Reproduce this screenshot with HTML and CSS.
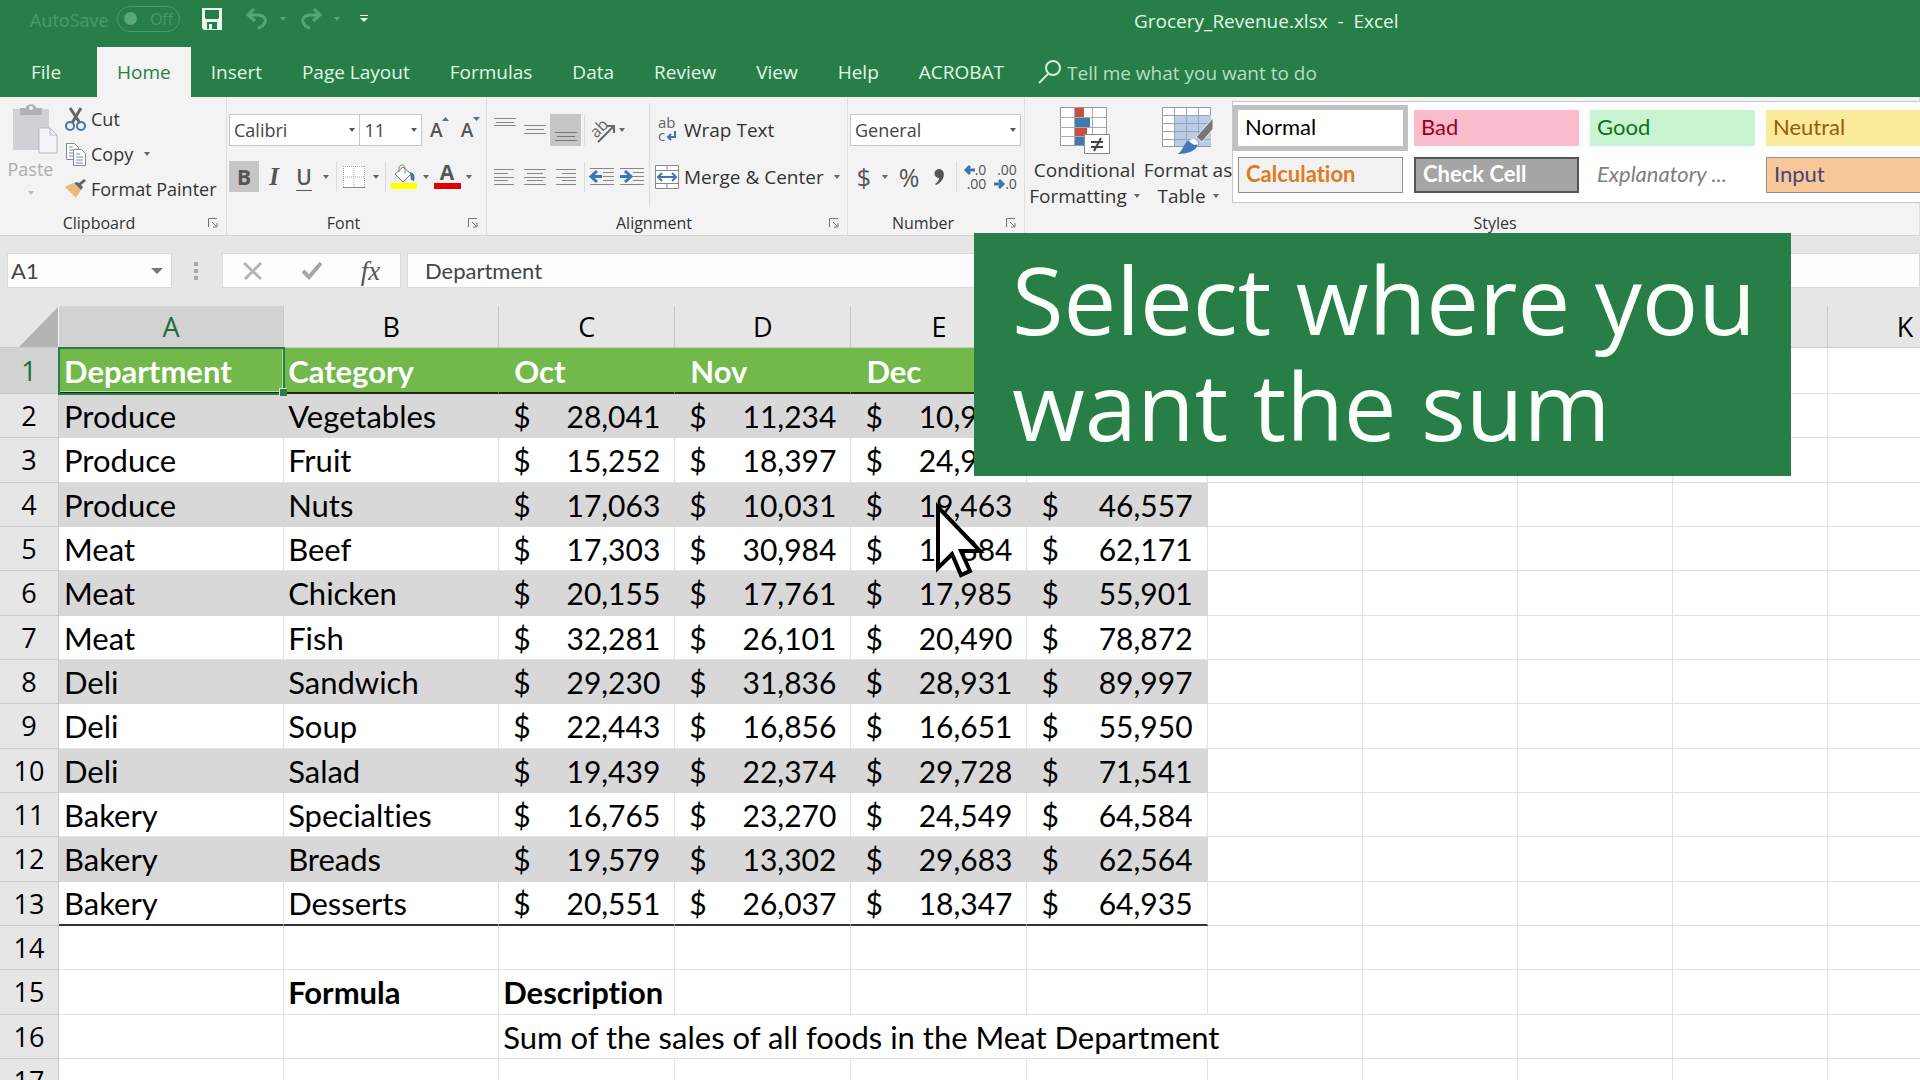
FILE: index.html
```html
<!DOCTYPE html>
<html lang="en">
<head>
<meta charset="utf-8">
<title>Grocery_Revenue.xlsx - Excel</title>
<link rel="stylesheet" href="styles.css">
</head>
<body>
<svg class="defs" aria-hidden="true">
  <symbol id="launcher" viewBox="0 0 10 10"><path d="M.5 9V.5H9M4 4l4 4M9 5v4H5" fill="none" stroke="#777"/></symbol>
</svg>

<header class="titlebar">
  <div class="quick">
    <label class="autosave" for="autosave">AutoSave</label>
    <button class="toggle" id="autosave" type="button"><i></i>Off</button>
    <button class="save" type="button" aria-label="Save"><svg width="20" height="22" viewBox="0 0 20 22"><path fill="#e9fbef" fill-rule="evenodd" d="M0 0h20v22H2l-2-2zM3 2v8l1 1h12l1-1V2zM5 14v7h2v-5h3v5h5v-7z"/></svg></button>
    <button class="undo" type="button" aria-label="Undo"><svg width="22" height="22" viewBox="0 0 22 22"><path d="M8 1L2 7l7 6M2 7h10c6 0 8 4 7 7s-3 5-7 6" fill="none" stroke="#56a674" stroke-width="3"/></svg></button>
    <span class="arrow faint"></span>
    <button class="redo" type="button" aria-label="Redo"><svg width="22" height="22" viewBox="0 0 22 22"><path d="M14 1l6 6-7 6M20 7H10c-6 0-8 4-7 7s3 5 7 6" fill="none" stroke="#56a674" stroke-width="3"/></svg></button>
    <span class="arrow faint"></span>
    <button class="customize" type="button" aria-label="Customize toolbar"><svg width="8" height="8" viewBox="0 0 8 8"><path d="M0 0h8v1H0zM0 3h8L4 7z" fill="#e9fbef"/></svg></button>
  </div>
  <h1 class="filename">Grocery_Revenue.xlsx&nbsp; -&nbsp; Excel</h1>
</header>

<nav class="tabs">
  <a class="file" href="#">File</a>
  <a class="active" href="#">Home</a>
  <a href="#">Insert</a>
  <a href="#">Page Layout</a>
  <a href="#">Formulas</a>
  <a href="#">Data</a>
  <a href="#">Review</a>
  <a href="#">View</a>
  <a href="#">Help</a>
  <a href="#">ACROBAT</a>
  <label class="tell">
    <svg width="24" height="24" viewBox="0 0 24 24"><path d="M10 14L1 23" stroke="#d3f0dc" stroke-width="2"/><circle cx="15" cy="8" r="7" fill="none" stroke="#d3f0dc" stroke-width="2"/></svg>
    <input type="text" placeholder="Tell me what you want to do" aria-label="Tell me what you want to do">
  </label>
</nav>

<section class="ribbon">
  <div class="group clipboard">
    <div class="body">
      <button class="paste" type="button">
        <svg width="46" height="50" viewBox="0 0 46 50"><path d="M1 5h36v41H1z" fill="#d3cfd6"/><path d="M8 4h6c0-5 10-5 10 0h6v7H8z" fill="#b4b1b5"/><circle cx="19" cy="4" r="2" fill="#f3f3f3"/><path d="M27 24h11l7 7v18H27z" fill="#f7f4f9" stroke="#bbb7bd"/><path d="M38 24v7h7" fill="none" stroke="#bbb7bd"/></svg>
        <span>Paste</span><span class="arrow pale"></span>
      </button>
      <div class="stack">
        <button type="button"><svg width="22" height="24" viewBox="0 0 22 24"><path d="M5 1l10 15M16 1L7 16" stroke="#666" stroke-width="3"/><circle cx="5" cy="19" r="4" fill="none" stroke="#4472b4" stroke-width="2"/><circle cx="16" cy="19" r="4" fill="none" stroke="#4472b4" stroke-width="2"/></svg>Cut</button>
        <button type="button"><svg width="22" height="24" viewBox="0 0 22 24"><path d="M1.500 1.500h8l4 4v12h-12z" fill="#fff" stroke="#888"/><path d="M4 5h4M4 8h7M4 11h7M4 14h7" stroke="#6a8fc0"/><path d="M8.500 7.500h8l4 4v12h-12z" fill="#fff" stroke="#888"/><path d="M11 12h4M11 15h7M11 18h7M11 21h7" stroke="#6a8fc0"/></svg>Copy<span class="arrow"></span></button>
        <button type="button"><svg width="22" height="20" viewBox="0 0 22 20"><path d="M0 8l8-4 8 7-5 8z" fill="#ecbb75"/><path d="M9 4l7 7 2-3-2-2 5-4-2-2-5 4-2-1z" fill="#666"/></svg>Format Painter</button>
      </div>
    </div>
    <footer>Clipboard<svg class="launch"><use href="#launcher"/></svg></footer>
  </div>

  <div class="group font">
    <div class="body rows">
      <div class="combos">
        <span class="combo name"><select aria-label="Font"><option>Calibri</option></select></span>
        <span class="combo size"><select aria-label="Font size"><option>11</option></select></span>
        <button class="grow" type="button">A<svg width="7" height="4"><path d="M0 4h7L3.500 0z" fill="#4472b4"/></svg></button>
        <button class="grow" type="button">A<svg width="7" height="4"><path d="M0 0h7L3.500 4z" fill="#4472b4"/></svg></button>
      </div>
      <div class="fontrow">
        <button class="on bold" type="button">B</button>
        <button class="italic" type="button">I</button>
        <button class="under" type="button">U</button>
        <span class="arrow"></span><span class="sep"></span>
        <button type="button" aria-label="Borders"><svg width="22" height="22" viewBox="0 0 22 22"><path d="M0 0h22v22H0z" fill="#fff"/><path d="M.5 0v21M21.500 0v21M0 .5h22M11 0v21M0 11h22" stroke="#aaa" stroke-dasharray="1 1"/><path d="M0 21.500h22" stroke="#888"/></svg></button>
        <span class="arrow"></span><span class="sep"></span>
        <button type="button" aria-label="Fill color"><svg width="28" height="26" viewBox="0 0 28 26"><path d="M5 10l8-7 8 7-8 8z" fill="#fff" stroke="#777"/><path d="M9 8V4c0-4 6-4 6 0v6" fill="none" stroke="#888"/><path d="M20 8c5 1 5 5 4 9l-3-1z" fill="#4472b4"/><path d="M1 19h26v6H1z" fill="#ff0"/></svg></button>
        <span class="arrow"></span>
        <button class="color" type="button">A<i></i></button>
        <span class="arrow"></span>
      </div>
    </div>
    <footer>Font<svg class="launch"><use href="#launcher"/></svg></footer>
  </div>

  <div class="group align">
    <div class="body">
      <div class="rows">
        <div class="alignrow">
          <button class="top" type="button" aria-label="Top align"><svg width="22" height="10"><path d="M0 .5h22M2 4.500h18M0 7.500h22" stroke="#888"/></svg></button>
          <button type="button" aria-label="Middle align"><svg width="22" height="10"><path d="M0 .5h22M2 4.500h18M0 8.500h22" stroke="#888"/></svg></button>
          <button class="on bottom" type="button" aria-label="Bottom align"><svg width="22" height="10"><path d="M0 .5h22M2 4.500h18M0 8.500h22" stroke="#777"/></svg></button>
          <span class="sep"></span>
          <button type="button" aria-label="Orientation"><svg width="26" height="26" viewBox="0 0 26 26"><text x="2" y="19" font-family="Open Sans" font-size="16" fill="#666" transform="rotate(-45 8 14)">ab</text><path d="M9 25L24 10M18 9h7v7" fill="none" stroke="#666" stroke-width="2"/></svg></button>
          <span class="arrow start"></span>
        </div>
        <div class="alignrow">
          <button type="button" aria-label="Align left"><svg width="22" height="16"><path d="M0 .5h20M0 4.500h14M0 8.500h20M0 11.500h14M0 15.500h20" stroke="#888"/></svg></button>
          <button type="button" aria-label="Center"><svg width="22" height="16"><path d="M0 .5h22M3 4.500h16M0 8.500h22M3 11.500h16M0 15.500h22" stroke="#888"/></svg></button>
          <button type="button" aria-label="Align right"><svg width="22" height="16"><path d="M1 .5h20M7 4.500h14M1 8.500h20M7 11.500h14M1 15.500h20" stroke="#888"/></svg></button>
          <span class="sep"></span>
          <button type="button" aria-label="Decrease indent"><svg width="24" height="18"><path d="M0 .5h24M13 4.500h11M13 8.500h11M13 12.500h11M0 16.500h24" stroke="#888"/><path d="M7 3L1 8.500 7 14M1 8.500h11" fill="none" stroke="#3f76b0" stroke-width="3"/></svg></button>
          <button type="button" aria-label="Increase indent"><svg width="24" height="18"><path d="M0 .5h24M13 4.500h11M13 8.500h11M13 12.500h11M0 16.500h24" stroke="#888"/><path d="M5 3l6 5.500L5 14M11 8.500H0" fill="none" stroke="#3f76b0" stroke-width="3"/></svg></button>
        </div>
      </div>
      <div class="rows wide">
        <button class="labelled" type="button"><svg width="26" height="28" viewBox="0 0 26 28"><text x="4" y="12" font-family="Open Sans" font-size="15" fill="#666">ab</text><text x="4" y="25" font-family="Open Sans" font-size="15" fill="#666">c</text><path d="M21 15v6h-7M17 18l-3 3 3 3" fill="none" stroke="#4472b4" stroke-width="2"/></svg>Wrap Text</button>
        <button class="labelled" type="button"><svg width="26" height="24" viewBox="0 0 26 24"><path d="M1.500.5h23v23h-23zM13 .5v5M13 18.500v5M1.500 5.500h23M1.500 18.500h23" fill="#fff" stroke="#888"/><path d="M4 12h18M8 8l-4 4 4 4M18 8l4 4-4 4" fill="none" stroke="#4472b4" stroke-width="2"/></svg>Merge &amp; Center<span class="arrow"></span></button>
      </div>
    </div>
    <footer>Alignment<svg class="launch"><use href="#launcher"/></svg></footer>
  </div>

  <div class="group number">
    <div class="body rows">
      <span class="combo"><select aria-label="Number format"><option>General</option></select></span>
      <div class="numrow">
        <button class="glyph" type="button">$</button><span class="arrow"></span>
        <button class="glyph" type="button">%</button>
        <button type="button" aria-label="Comma style"><svg width="10" height="16" viewBox="0 0 10 16"><path d="M5 0c7 0 7 12-3 16l-1-1c3-2 4-4 4-6C-1 9-1 0 5 0z" fill="#555"/></svg></button>
        <span class="sep"></span>
        <button class="decimal" type="button"><span><svg width="11" height="10"><path d="M6 1L2 5l4 4M2 5h9" fill="none" stroke="#3f76b0" stroke-width="3"/></svg>.0</span><span>.00</span></button>
        <button class="decimal" type="button"><span>.00</span><span><svg width="11" height="10"><path d="M5 1l4 4-4 4M9 5H0" fill="none" stroke="#3f76b0" stroke-width="3"/></svg>.0</span></button>
      </div>
    </div>
    <footer>Number<svg class="launch"><use href="#launcher"/></svg></footer>
  </div>

  <div class="group styles">
    <div class="body">
      <button class="big cond" type="button">
        <svg width="50" height="48" viewBox="0 0 50 48"><path d="M.5.5h46v38H.5z" fill="#fff" stroke="#999"/><path d="M0 10.500h46M0 20.500h46M0 29.500h46M14.500 0v38M32.500 0v38" stroke="#aaa"/><path d="M15 1h9v9h-9zM15 21h12v8H15z" fill="#c84f42"/><path d="M15 11h15v9H15zM15 30h9v8h-9z" fill="#4079b0"/><path d="M24.500 27.500h25v19h-25z" fill="#fff" stroke="#888"/><path d="M31 35h12M31 40h12M41 31l-7 13" stroke="#444" stroke-width="2"/></svg>
        <span>Conditional</span><span>Formatting<i class="arrow"></i></span>
      </button>
      <button class="big astable" type="button">
        <svg width="52" height="48" viewBox="0 0 52 48"><path d="M.5.5h48v39H.5z" fill="#fff" stroke="#999"/><path d="M12 8h37v31H12z" fill="#b9cde8"/><path d="M0 8.500h48M0 16.500h48M0 24.500h48M0 32.500h48M12.500 0v39M24.500 0v39M36.500 0v39" stroke="#99a5b5"/><path d="M51 11v11L40 35l-6-5z" fill="#777" stroke="#f3f3f3"/><path d="M15 47c7-2 6-14 15-14 9 1 8 14-15 14z" fill="#4079b8"/><path d="M27 34c4 5 8 4 9 3-1-6-6-6-9-3z" fill="#fff"/></svg>
        <span>Format as</span><span>Table<i class="arrow"></i></span>
      </button>
      <div class="gallery">
        <button class="style normal" type="button">Normal</button>
        <button class="style bad" type="button">Bad</button>
        <button class="style good" type="button">Good</button>
        <button class="style neutral" type="button">Neutral</button>
        <button class="style calc" type="button">Calculation</button>
        <button class="style check" type="button">Check Cell</button>
        <button class="style expl" type="button">Explanatory ...</button>
        <button class="style inp" type="button">Input</button>
      </div>
    </div>
    <footer>Styles</footer>
  </div>
</section>

<section class="formulabar">
  <span class="namebox"><input type="text" value="A1" aria-label="Name box"><span class="drop"></span></span>
  <svg class="dots" width="4" height="18" viewBox="0 0 4 18"><path d="M0 0h4v4H0zM0 7h4v4H0zM0 14h4v4H0z" fill="#aaa"/></svg>
  <div class="actions">
    <button type="button" aria-label="Cancel"><svg width="20" height="18" viewBox="0 0 20 18"><path d="M1 1l17 16M18 1L2 17" stroke="#b5b5b5" stroke-width="3"/></svg></button>
    <button type="button" aria-label="Enter"><svg width="20" height="18" viewBox="0 0 20 18"><path d="M1 9l6 6L19 1" fill="none" stroke="#a5a5a5" stroke-width="4"/></svg></button>
    <button class="fx" type="button">fx</button>
  </div>
  <input class="formula" type="text" value="Department" aria-label="Formula bar">
</section>

<main class="sheet">
<table>
  <colgroup><col class="c-head"><col class="c-a"><col class="c-b"><col class="c-m"><col class="c-m"><col class="c-m"><col class="c-f"><col class="c-x"><col class="c-x"><col class="c-x"><col class="c-x"><col class="c-x"></colgroup>
  <thead><tr><th class="corner"><svg width="39" height="40"><path d="M39 0v40H0z" fill="#b4b4b4"/></svg></th><th class="sel">A</th><th>B</th><th>C</th><th>D</th><th>E</th><th>F</th><th>G</th><th>H</th><th>I</th><th>J</th><th>K</th></tr></thead>
  <tbody>
  <tr class="head"><th class="sel">1</th><td class="cursor">Department</td><td>Category</td><td class="m">Oct</td><td class="m">Nov</td><td class="m">Dec</td><td class="m">Total</td><td></td><td></td><td></td><td></td><td></td></tr>
  <tr class="band"><th>2</th><td>Produce</td><td>Vegetables</td><td><p><span>$</span>28,041</p></td><td><p><span>$</span>11,234</p></td><td><p><span>$</span>10,942</p></td><td><p><span>$</span>50,217</p></td><td></td><td></td><td></td><td></td><td></td></tr>
  <tr><th>3</th><td>Produce</td><td>Fruit</td><td><p><span>$</span>15,252</p></td><td><p><span>$</span>18,397</p></td><td><p><span>$</span>24,953</p></td><td><p><span>$</span>58,602</p></td><td></td><td></td><td></td><td></td><td></td></tr>
  <tr class="band"><th>4</th><td>Produce</td><td>Nuts</td><td><p><span>$</span>17,063</p></td><td><p><span>$</span>10,031</p></td><td><p><span>$</span>19,463</p></td><td><p><span>$</span>46,557</p></td><td></td><td></td><td></td><td></td><td></td></tr>
  <tr><th>5</th><td>Meat</td><td>Beef</td><td><p><span>$</span>17,303</p></td><td><p><span>$</span>30,984</p></td><td><p><span>$</span>13,884</p></td><td><p><span>$</span>62,171</p></td><td></td><td></td><td></td><td></td><td></td></tr>
  <tr class="band"><th>6</th><td>Meat</td><td>Chicken</td><td><p><span>$</span>20,155</p></td><td><p><span>$</span>17,761</p></td><td><p><span>$</span>17,985</p></td><td><p><span>$</span>55,901</p></td><td></td><td></td><td></td><td></td><td></td></tr>
  <tr><th>7</th><td>Meat</td><td>Fish</td><td><p><span>$</span>32,281</p></td><td><p><span>$</span>26,101</p></td><td><p><span>$</span>20,490</p></td><td><p><span>$</span>78,872</p></td><td></td><td></td><td></td><td></td><td></td></tr>
  <tr class="band"><th>8</th><td>Deli</td><td>Sandwich</td><td><p><span>$</span>29,230</p></td><td><p><span>$</span>31,836</p></td><td><p><span>$</span>28,931</p></td><td><p><span>$</span>89,997</p></td><td></td><td></td><td></td><td></td><td></td></tr>
  <tr><th>9</th><td>Deli</td><td>Soup</td><td><p><span>$</span>22,443</p></td><td><p><span>$</span>16,856</p></td><td><p><span>$</span>16,651</p></td><td><p><span>$</span>55,950</p></td><td></td><td></td><td></td><td></td><td></td></tr>
  <tr class="band"><th>10</th><td>Deli</td><td>Salad</td><td><p><span>$</span>19,439</p></td><td><p><span>$</span>22,374</p></td><td><p><span>$</span>29,728</p></td><td><p><span>$</span>71,541</p></td><td></td><td></td><td></td><td></td><td></td></tr>
  <tr><th>11</th><td>Bakery</td><td>Specialties</td><td><p><span>$</span>16,765</p></td><td><p><span>$</span>23,270</p></td><td><p><span>$</span>24,549</p></td><td><p><span>$</span>64,584</p></td><td></td><td></td><td></td><td></td><td></td></tr>
  <tr class="band"><th>12</th><td>Bakery</td><td>Breads</td><td><p><span>$</span>19,579</p></td><td><p><span>$</span>13,302</p></td><td><p><span>$</span>29,683</p></td><td><p><span>$</span>62,564</p></td><td></td><td></td><td></td><td></td><td></td></tr>
  <tr class="last"><th>13</th><td>Bakery</td><td>Desserts</td><td><p><span>$</span>20,551</p></td><td><p><span>$</span>26,037</p></td><td><p><span>$</span>18,347</p></td><td><p><span>$</span>64,935</p></td><td></td><td></td><td></td><td></td><td></td></tr>
  <tr><th>14</th><td></td><td></td><td></td><td></td><td></td><td></td><td></td><td></td><td></td><td></td><td></td></tr>
  <tr class="strong"><th>15</th><td></td><td>Formula</td><td>Description</td><td></td><td></td><td></td><td></td><td></td><td></td><td></td><td></td></tr>
  <tr><th>16</th><td></td><td></td><td colspan="5">Sum of the sales of all foods in the Meat Department</td><td></td><td></td><td></td><td></td></tr>
  <tr><th>17</th><td></td><td></td><td></td><td></td><td></td><td></td><td></td><td></td><td></td><td></td><td></td></tr>
  </tbody>
</table>
</main>

<div class="caption">Select where you<br>want the sum</div>
<svg class="pointer" width="50" height="78" viewBox="0 0 50 78"><path d="M3 7v61l14-14 9 21 9-4-9-20h19z" fill="#fff" stroke="#000" stroke-width="4"/></svg>
</body>
</html>
```
FILE: styles.css
```css
* { box-sizing: border-box; }

body {
  margin: 0;
  height: 100vh;
  overflow: hidden;
  position: relative;
  background: #e6e6e6;
  color: #333;
  font: 18px/24px "Open Sans", "Noto Sans", sans-serif;
}

button, input, select {
  font: inherit;
  color: inherit;
  border: 0;
  padding: 0;
  margin: 0;
  background: none;
  border-radius: 0;
  outline: 0;
}

button {
  display: flex;
  align-items: center;
  justify-content: center;
  white-space: nowrap;
}

svg { display: block; flex: none; overflow: visible; }
.defs { position: absolute; width: 0; height: 0; }

.arrow {
  flex: none;
  width: 0;
  height: 0;
  border: 3px solid transparent;
  border-top: 4px solid #666;
  border-bottom: 0;
}
.arrow.faint { border-top-color: #56a674; }
.arrow.pale { border-top-color: #bbb; }

/* Title bar */
.titlebar {
  display: grid;
  grid-template-columns: 1134px 1fr;
  align-items: start;
  height: 47px;
  background: #277e47;
  color: #e0f7e6;
}
.quick { display: flex; align-items: center; height: 37px; padding-left: 30px; }
.autosave { width: 87px; color: #4c9a68; line-height: 28px; padding-top: 3px; }
.toggle {
  width: 63px;
  height: 26px;
  gap: 13px;
  border: 1px solid #4c9a68;
  border-radius: 13px;
  color: #4c9a68;
  font-size: 16px;
}
.toggle i { width: 13px; height: 13px; border-radius: 50%; background: #5aa877; }
.save { margin-left: 22px; }
.undo { margin: 0 12px 0 24px; }
.redo { margin: 0 12px 0 14px; }
.customize { margin-left: 20px; }
.filename { margin: 0; font-size: 19px; font-weight: 400; line-height: 42px; }

/* Tabs */
.tabs { display: flex; height: 50px; background: #277e47; font-size: 19px; }
.tabs a {
  padding: 0 20px;
  color: #e0f7e6;
  line-height: 50px;
  text-decoration: none;
  white-space: nowrap;
}
.tabs .file { width: 97px; padding: 0 31px; }
.tabs .active { background: #f3f3f3; color: #277e47; }
.tell { display: flex; align-items: center; gap: 5px; padding-left: 14px; }
.tell input { width: 280px; height: 50px; padding-top: 2px; }
.tell input::placeholder { color: #b4dfc1; opacity: 1; }

/* Ribbon */
.ribbon {
  display: flex;
  height: 139px;
  background: #f3f3f3;
  border-bottom: 1px solid #d5d5d5;
  overflow: hidden;
}
.group {
  display: flex;
  flex-direction: column;
  flex: none;
  border-right: 1px solid #dedede;
}
.group .body { display: flex; height: 114px; }
.group footer {
  position: relative;
  height: 24px;
  text-align: center;
  font-size: 16px;
}
.launch { position: absolute; right: 8px; top: 7px; width: 10px; height: 10px; }
.clipboard { width: 227px; }
.font { width: 260px; }
.align { width: 361px; }
.number { width: 177px; }
.styles { flex: 1; min-width: 0; }
.clipboard footer { padding-right: 28px; }
.font footer, .number footer { padding-right: 26px; }
.align footer { padding-right: 26px; }
.styles footer { padding-left: 46px; }
.group .rows {
  display: flex;
  flex-direction: column;
  gap: 15px;
  padding: 17px 0 0 2px;
}
.sep { width: 1px; height: 30px; background: #dcdcdc; }
.on { background: #c6c6c6; }

.paste {
  flex-direction: column;
  justify-content: start;
  width: 61px;
  padding: 7px 0 0;
  color: #aeaeae;
}
.paste svg { margin-left: 8px; }
.paste .arrow { margin-top: 10px; }
.paste span:first-of-type { margin-top: 3px; }
.stack { padding: 4px 0 0 4px; }
.stack button { height: 35px; gap: 4px; }
.stack .arrow { margin-left: 7px; }

.combos { display: flex; }
.combo { display: block; position: relative; height: 32px; background: #fff; border: 1px solid #c8c8c8; }
.combo select { width: 100%; height: 30px; padding-left: 4px; appearance: none; color: #444; }
.combo::after {
  content: "";
  position: absolute;
  right: 4px;
  top: 13px;
  border: 3px solid transparent;
  border-top: 4px solid #555;
  border-bottom: 0;
}
.combo.name { width: 132px; }
.combo.size { width: 62px; border-left: 0; margin-right: 2px; }
.number .combo { width: 171px; }
.grow { width: 31px; color: #555; font-size: 19px; font-weight: 600; }
.grow svg { margin-bottom: 22px; }

.fontrow, .alignrow, .numrow { display: grid; height: 31px; justify-items: center; align-items: center; }
.alignrow { height: 32px; }
.fontrow { grid-template-columns: 30px 30px 30px 14px 6px 30px 14px 4px 34px 10px 32px 12px; }
.alignrow { grid-template-columns: 31px 30px 31px 6px 30px 30px; }
.numrow { grid-template-columns: 28px 14px 34px 26px 8px 30px 31px; }
.fontrow button { width: 100%; height: 31px; color: #555; font-size: 21px; font-weight: 700; }
.alignrow button { width: 100%; height: 32px; }
.fontrow .italic { font-family: "Liberation Serif", serif; font-style: italic; font-size: 25px; }
.fontrow .under { text-decoration: underline 1px; text-underline-offset: 5px; font-weight: 600; }
.fontrow .color { flex-direction: column; justify-content: start; line-height: 22px; }
.color i { width: 27px; height: 6px; background: #e00000; }
.alignrow .top { align-items: start; padding-top: 4px; }
.alignrow .bottom { align-items: end; padding-bottom: 4px; }
.alignrow .start { justify-self: start; margin-left: 2px; }

.align .rows.wide { margin: 6px 0 0 2px; padding: 11px 0 0 4px; border-left: 1px solid #dcdcdc; height: 104px; }
.labelled { justify-content: start; height: 32px; gap: 4px; font-size: 19px; }
.labelled .arrow { margin-left: 6px; }

.glyph { color: #555; font-size: 25px; }
.decimal { flex-direction: column; align-items: end; color: #555; font-size: 14px; line-height: 14px; }
.decimal span { display: flex; align-items: center; }

.styles .body > * { flex: none; }
.big { flex-direction: column; justify-content: start; padding-top: 10px; font-size: 19px; line-height: 26px; }
.big svg { margin-bottom: 2px; }
.big span { display: flex; align-items: center; gap: 7px; }
.cond { width: 119px; }
.astable { width: 88px; }

.gallery {
  display: grid;
  grid-template-columns: repeat(4, 165px);
  grid-auto-rows: 36px;
  gap: 11px;
  margin-top: 4px;
  height: 102px;
  padding: 8px 5px;
  background: #fff;
  border: 1px solid #c8c8c8;
}
.style {
  justify-content: start;
  padding: 0 7px 2px;
  font: 22px/24px Lato, sans-serif;
  font-variant-ligatures: none;
}
.normal { outline: 5px solid #c0c0c0; color: #000; }
.bad { background: #f8bccd; color: #9c0018; }
.good { background: #c8f5d0; color: #0f7018; }
.neutral { background: #faea9c; color: #9c5a0c; }
.calc { background: #f2f2f2; border: 1px solid #8f8f8f; color: #e07b1c; font-weight: 700; }
.check { background: #a5a5a5; border: 2px solid #555; color: #fff; font-weight: 700; }
.expl { color: #7f7f7f; font-style: italic; }
.inp { background: #f8c797; border: 1px solid #8f8f8f; color: #4a4279; }

/* Formula bar */
.formulabar {
  display: flex;
  align-items: center;
  padding: 17px 0 18px 7px;
  font: 22px/34px Lato, sans-serif;
  color: #444;
}
.namebox { display: flex; align-items: center; width: 165px; height: 35px; padding: 0 8px 0 3px; background: #fdfdfd; border: 1px solid #dadada; }
.namebox input { flex: 1; min-width: 0; height: 33px; }
.drop { border: 6px solid transparent; border-top-color: #777; border-bottom: 0; }
.dots { margin: 0 24px 0 22px; }
.actions { display: flex; width: 179px; height: 35px; background: #fdfdfd; border: 1px solid #dadada; }
.actions button { flex: 1; }
.actions .fx { font: italic 27px/30px "Liberation Serif", serif; color: #555; }
.formula { flex: 1; height: 35px; margin-left: 6px; padding-left: 17px; background: #fdfdfd; border: 1px solid #dadada; }

/* Worksheet */
.sheet { background: #fff; overflow: hidden; }
table {
  table-layout: fixed;
  width: 1983px;
  border-collapse: separate;
  border-spacing: 0;
  font: 31px/36px Lato, sans-serif;
  font-variant-ligatures: none;
  color: #000;
}
.c-head { width: 59px; }
.c-a { width: 225px; }
.c-b { width: 215px; }
.c-m { width: 176px; }
.c-f { width: 180px; }
.c-x { width: 155px; }
th {
  padding: 0;
  background: #e6e6e6;
  border-right: 1px solid #c9c9c9;
  border-bottom: 1px solid #c9c9c9;
  font: 27px/36px "Open Sans", "Noto Sans", sans-serif;
}
thead th { height: 42px; }
th.sel { background: #d2d2d2; color: #1f6b40; }
.corner svg { margin-left: 19px; }
thead .corner { padding: 0; border-right-color: #f3f3f3; }
td {
  padding: 0 4px;
  border-right: 1px solid #e1e1e1;
  border-bottom: 1px solid #e1e1e1;
  white-space: nowrap;
}
td:nth-child(2) { padding-left: 5px; }
tbody tr { height: 44px; }
tbody tr:nth-child(3n) { height: 45px; }
td p { display: flex; justify-content: space-between; margin: 0; padding: 0 10px; font-size: 30px; }
tbody .head { height: 46px; font-weight: 700; }
.head td:nth-child(-n+7) { background: #72b84a; border-right-color: #72b84a; border-bottom: 2px solid #1d2b16; padding-top: 2px; color: #fff; }
.head .m { padding-left: 15px; }
.head .cursor { position: relative; box-shadow: inset 0 0 0 1px #b9dca4; outline: 2px solid #277e47; outline-offset: -1px; }
.cursor::after {
  content: "";
  position: absolute;
  right: -4px;
  bottom: -4px;
  width: 7px;
  height: 7px;
  background: #277e47;
  border: 1px solid #d8edcf;
  border-width: 1px 0 0 1px;
}
.band td:nth-child(-n+7) { background: #d8d8d8; border-color: #d8d8d8; }
.last td:nth-child(-n+7) { border-bottom: 2px solid #333; }
.strong td { font-weight: 700; }

/* Overlays */
.caption {
  position: absolute;
  left: 974px;
  top: 233px;
  width: 817px;
  height: 243px;
  padding: 13px 0 0 38px;
  background: #277e47;
  color: #fbfff9;
  font-size: 94px;
  line-height: 106px;
  white-space: nowrap;
}
.pointer { position: absolute; left: 935px; top: 500px; }
```
